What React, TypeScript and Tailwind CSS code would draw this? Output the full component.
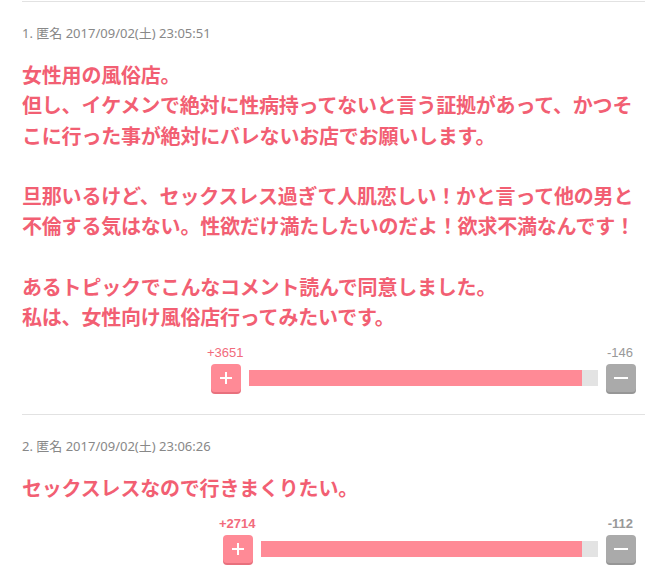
import React from "react";

interface Comment {
	no: number;
	date: string;
	lines: string[];
	plus: number;
	minus: number;
	boldCount: boolean;
	widgetW: string;
	fill: string;
}

const comments: Comment[] = [
	{
		no: 1,
		date: "2017/09/02(土) 23:05:51",
		lines: [
			"女性用の風俗店。",
			"但し、イケメンで絶対に性病持ってないと言う証拠があって、かつそ",
			"こに行った事が絶対にバレないお店でお願いします。",
			"",
			"旦那いるけど、セックスレス過ぎて人肌恋しい！かと言って他の男と",
			"不倫する気はない。性欲だけ満たしたいのだよ！欲求不満なんです！",
			"",
			"あるトピックでこんなコメント読んで同意しました。",
			"私は、女性向け風俗店行ってみたいです。",
		],
		plus: 3651,
		minus: 146,
		boldCount: false,
		widgetW: "w-[425px]",
		fill: "95.4%",
	},
	{
		no: 2,
		date: "2017/09/02(土) 23:06:26",
		lines: ["セックスレスなので行きまくりたい。"],
		plus: 2714,
		minus: 112,
		boldCount: true,
		widgetW: "w-[413px]",
		fill: "95.3%",
	},
];

const Vote = ({ c }: { c: Comment }) => {
	return (
		<div className="flex justify-end mr-[9px]">
			<div className={c.widgetW}>
				<div
					className={`flex justify-between text-[13px] leading-[14px] ${
						c.boldCount ? "font-bold" : ""
					}`}
					style={{ fontFamily: "'Liberation Sans', Arial, sans-serif" }}
				>
					<span className="text-[#f26b7c] -ml-[4px]">+{c.plus}</span>
					<span className="text-[#999] mr-[3px]">-{c.minus}</span>
				</div>
				<div className="flex items-center gap-2 mt-[4px]">
					<button className="w-[30px] h-[28px] rounded-[4px] bg-[#ff8a96] shadow-[0_2px_0_#e8707d] flex items-center justify-center">
						<svg width="14" height="14" viewBox="0 0 14 14">
							<path d="M7 1v12M1 7h12" stroke="#fff" strokeWidth="2" />
						</svg>
					</button>
					<div className="flex-1 h-4 bg-[#e3e3e3]">
						<div className="h-full bg-[#ff8a96]" style={{ width: c.fill }} />
					</div>
					<button className="w-[30px] h-[28px] rounded-[4px] bg-[#aaaaaa] shadow-[0_2px_0_#969696] flex items-center justify-center">
						<svg width="16" height="14" viewBox="0 0 16 14">
							<path d="M1 7h14" stroke="#fff" strokeWidth="2" />
						</svg>
					</button>
				</div>
			</div>
		</div>
	);
};

export default function App() {
	return (
		<div
			className="bg-white w-[667px] h-[586px] overflow-hidden px-[22px] pt-[1px]"
			style={{ fontFamily: "'Noto Sans CJK JP', 'Noto Sans', sans-serif" }}
		>
			{comments.map((c) => (
				<div key={c.no} className="border-t border-[#e2e2e2] pb-[22px]">
					<div
						className="text-[13px] leading-[18px] text-[#888] mt-[22px]"
						style={{ fontFamily: "'Noto Sans', 'Noto Sans CJK JP', sans-serif" }}
					>
						{c.no}. 匿名 {c.date}
					</div>
					<div className="mt-[18px] text-[20px] leading-[30.3px] font-bold text-[#f25f73] tracking-[-0.2px]">
						{c.lines.map((l, i) => (
							<div key={i}>{l === "" ? "\u00a0" : l}</div>
						))}
					</div>
					<div className={c.no === 1 ? "mt-[13px]" : "mt-[14px]"}>
						<Vote c={c} />
					</div>
				</div>
			))}
		</div>
	);
}
